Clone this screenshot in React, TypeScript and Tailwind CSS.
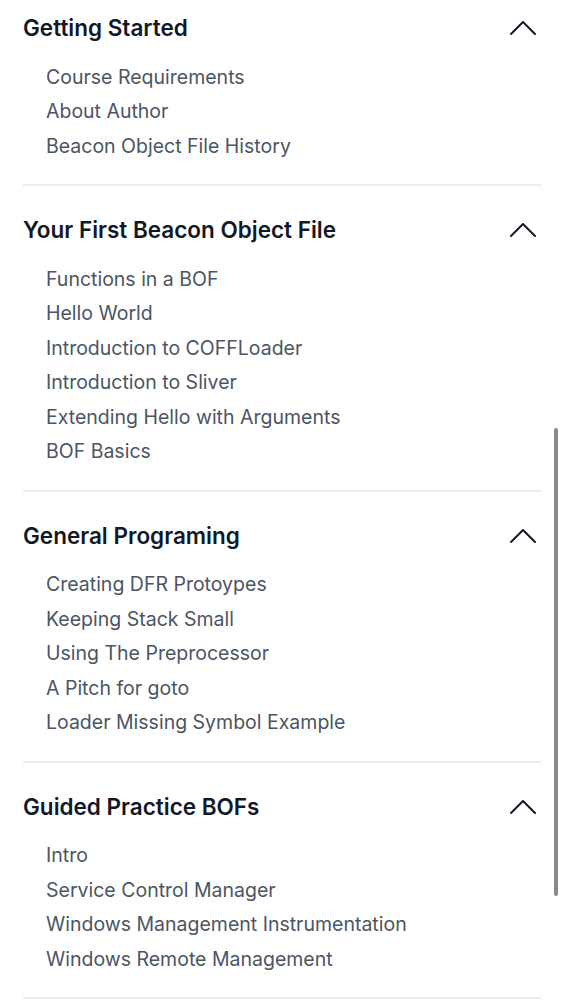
import React from "react";

const sections = [
  { title: "Getting Started", items: ["Course Requirements", "About Author", "Beacon Object File History"] },
  {
    title: "Your First Beacon Object File",
    items: [
      "Functions in a BOF",
      "Hello World",
      "Introduction to COFFLoader",
      "Introduction to Sliver",
      "Extending Hello with Arguments",
      "BOF Basics",
    ],
  },
  {
    title: "General Programing",
    items: [
      "Creating DFR Protoypes",
      "Keeping Stack Small",
      "Using The Preprocessor",
      "A Pitch for goto",
      "Loader Missing Symbol Example",
    ],
  },
  {
    title: "Guided Practice BOFs",
    items: [
      "Intro",
      "Service Control Manager",
      "Windows Management Instrumentation",
      "Windows Remote Management",
    ],
  },
];

function Chevron() {
  return (
    <svg width="28" height="16" viewBox="0 0 28 16" fill="none" className="shrink-0">
      <polyline points="2,14 14,2 26,14" stroke="#111827" strokeWidth="2" strokeLinecap="round" strokeLinejoin="round" />
    </svg>
  );
}

export default function App() {
  return (
    <div
      className="relative w-[564px] h-[1000px] overflow-hidden bg-white"
      style={{ fontFamily: "Inter, 'Noto Sans', sans-serif" }}
    >
      <div className="px-[23px]">
        {sections.map((s, i) => (
          <div key={s.title} className={`border-b-2 border-[#ececec] ${i === 0 ? "pt-[14px]" : "pt-[30px]"} pb-[21px]`}>
            <div className="flex items-center justify-between h-[28px] pr-[4px]">
              <span className="text-[22.5px] font-semibold text-[#111827]">{s.title}</span>
              <Chevron />
            </div>
            <ul className="mt-[17.5px] pl-[23px]">
              {s.items.map((it) => (
                <li key={it} className="h-[34.5px] leading-[34.5px] text-[19.5px] text-[#4b5563]">
                  {it}
                </li>
              ))}
            </ul>
          </div>
        ))}
      </div>
      <div className="absolute right-[6px] top-[428px] w-[4px] h-[468px] rounded-full bg-[#8a8a8a]" />
    </div>
  );
}
